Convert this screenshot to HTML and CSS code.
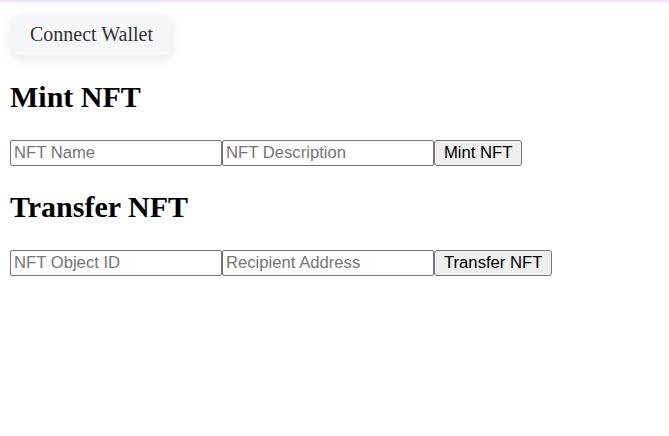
FILE: index.html
```html
<!DOCTYPE html>
<html>
<head>
<meta charset="utf-8">
<link rel="stylesheet" href="styles.css">
</head>
<body>
<div class="topline"></div>
<main class="page">
  <button class="connect">Connect Wallet</button>
  <h2 class="title">Mint NFT</h2>
  <div class="row">
    <input class="field" placeholder="NFT Name"><input class="field" placeholder="NFT Description"><button class="action">Mint NFT</button>
  </div>
  <h2 class="title">Transfer NFT</h2>
  <div class="row">
    <input class="field" placeholder="NFT Object ID"><input class="field" placeholder="Recipient Address"><button class="action">Transfer NFT</button>
  </div>
</main>
</body>
</html>
```

FILE: styles.css
```css
html, body {
  margin: 0;
  padding: 0;
  background: #ffffff;
}
body {
  font-family: "Liberation Serif", "Times New Roman", serif;
  font-size: 20px;
  color: #000;
}
.topline {
  height: 2px;
  background: #efe3f5;
}
.page {
  padding: 0 10px;
}
.connect {
  display: flex;
  align-items: center;
  justify-content: center;
  margin: 12px 0 25px;
  width: 163px;
  height: 41px;
  padding: 0 20px;
  border: none;
  border-radius: 11px;
  background: #f6f7f9;
  box-shadow: 0 4px 12px rgba(0, 0, 0, 0.08);
  font-family: "Liberation Serif", "Times New Roman", serif;
  font-size: 20px;
  color: #333;
}
.title {
  font-family: "Liberation Serif", "Times New Roman", serif;
  font-size: 30px;
  font-weight: bold;
  margin: 24px 0 26px;
  line-height: normal;
}
.row {
  display: flex;
  align-items: flex-start;
  height: 26px;
}
.field {
  box-sizing: border-box;
  width: 212px;
  height: 26px;
  margin: 0;
  padding: 1px 3px;
  border: 1px solid #767676;
  border-radius: 2px;
  background: #fff;
  font-family: "Liberation Sans", Arial, sans-serif;
  font-size: 16.67px;
  color: #000;
}
.field::placeholder {
  color: #757575;
}
.action {
  box-sizing: border-box;
  height: 26px;
  margin: 0;
  padding: 1px 9px;
  border: 1px solid #767676;
  border-radius: 3px;
  background: #efefef;
  font-family: "Liberation Sans", Arial, sans-serif;
  font-size: 16.67px;
  color: #000;
}
```
